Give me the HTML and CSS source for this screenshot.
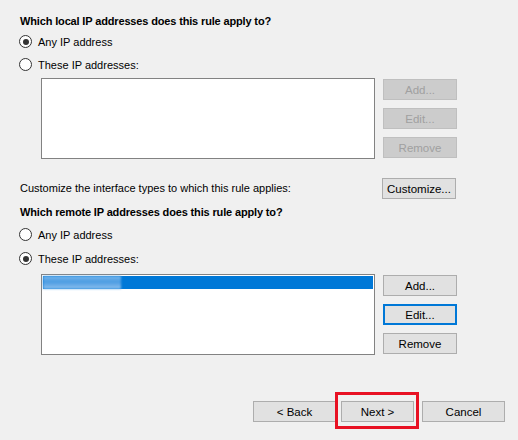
FILE: index.html
```html
<!DOCTYPE html>
<html>
<head>
<meta charset="utf-8">
<link rel="stylesheet" href="styles.css">
</head>
<body>
<div class="page">
  <div class="heading h1">Which local IP addresses does this rule apply to?</div>
  <div class="radio-row"><span class="radio checked"></span><span>Any IP address</span></div>
  <div class="radio-row"><span class="radio"></span><span>These IP addresses:</span></div>
  <div class="list-row lr1">
    <div class="listbox"></div>
    <div class="btn-col">
      <div class="btn disabled">Add...</div>
      <div class="btn disabled">Edit...</div>
      <div class="btn disabled">Remove</div>
    </div>
  </div>
  <div class="customize-row">
    <span>Customize the interface types to which this rule applies:</span>
    <div class="btn cust">Customize...</div>
  </div>
  <div class="heading h2">Which remote IP addresses does this rule apply to?</div>
  <div class="radio-row r2a"><span class="radio"></span><span>Any IP address</span></div>
  <div class="radio-row r2b"><span class="radio checked"></span><span>These IP addresses:</span></div>
  <div class="list-row lr2">
    <div class="listbox">
      <div class="item selected"><div class="blurred"></div></div>
    </div>
    <div class="btn-col">
      <div class="btn">Add...</div>
      <div class="btn focused">Edit...</div>
      <div class="btn">Remove</div>
    </div>
  </div>
  <div class="footer">
    <div class="btn wide">&lt; Back</div>
    <div class="next-wrap"><div class="btn next">Next &gt;</div></div>
    <div class="btn wide">Cancel</div>
  </div>
</div>
</body>
</html>
```

FILE: styles.css
```css
html, body {
  margin: 0;
  padding: 0;
  background: #f0f0f0;
}
body {
  width: 518px;
  height: 440px;
  overflow: hidden;
  font-family: "Liberation Sans", Arial, sans-serif;
  font-size: 11px;
  color: #000;
}
.page {
  padding: 12px 0 0 20px;
  display: flex;
  flex-direction: column;
}
.heading {
  font-weight: bold;
  font-size: 11px;
  letter-spacing: -0.15px;
  line-height: 18px;
  height: 18px;
}
.h2 {
  margin-top: 4px;
}
.radio-row {
  height: 23px;
  display: flex;
  align-items: center;
  gap: 6px;
}
.r2a { margin-top: 2px; }
.r2b { margin-top: 1px; }
.radio {
  width: 11px;
  height: 11px;
  border: 1px solid #333;
  border-radius: 50%;
  background: #fff;
  display: flex;
  align-items: center;
  justify-content: center;
  box-sizing: content-box;
  margin-left: -1px;
}
.radio.checked::after {
  content: "";
  width: 6px;
  height: 6px;
  border-radius: 50%;
  background: #333;
}
.list-row {
  display: flex;
  margin-left: 21px;
  gap: 8px;
}
.lr1 { margin-top: 2px; }
.lr2 { margin-top: 4px; }
.listbox {
  border: 1px solid #828282;
  background: #fff;
  padding: 1px;
  box-sizing: content-box;
  width: 330px;
  height: 77px;
}
.item {
  height: 13px;
}
.item.selected {
  background: #0078d7;
  display: flex;
}
.blurred {
  width: 78px;
  height: 13px;
  background: linear-gradient(to bottom, #7ab8ec, #4a9be2 45%, #5ea6e6 60%, #8cc0ee);
  filter: blur(1px);
}
.btn-col {
  display: flex;
  flex-direction: column;
  gap: 8px;
  margin-top: 1px;
}
.btn {
  width: 72px;
  height: 19px;
  border: 1px solid #adadad;
  background: #e1e1e1;
  display: flex;
  align-items: center;
  justify-content: center;
  box-sizing: content-box;
  font-size: 11.5px;
}
.btn.disabled {
  background: #cccccc;
  border-color: #bfbfbf;
  color: #a0a0a0;
}
.btn.focused {
  border: 2px solid #0078d7;
  width: 70px;
  height: 17px;
}
.customize-row {
  margin-top: 19px;
  display: flex;
  align-items: center;
  justify-content: space-between;
  width: 436px;
  height: 21px;
}
.customize-row span {
  margin-top: -2px;
}
.btn.cust {
  width: 72px;
}
.footer {
  margin-top: 46px;
  margin-left: 233px;
  display: flex;
  align-items: center;
}
.btn.wide {
  width: 81px;
}
.next-wrap {
  position: relative;
  margin: 0 8px 0 5px;
}
.btn.next {
  width: 71px;
}
.next-wrap::after {
  content: "";
  position: absolute;
  left: -6px;
  top: -9px;
  right: -5px;
  bottom: -7px;
  border: 3px solid #e81123;
}
```
